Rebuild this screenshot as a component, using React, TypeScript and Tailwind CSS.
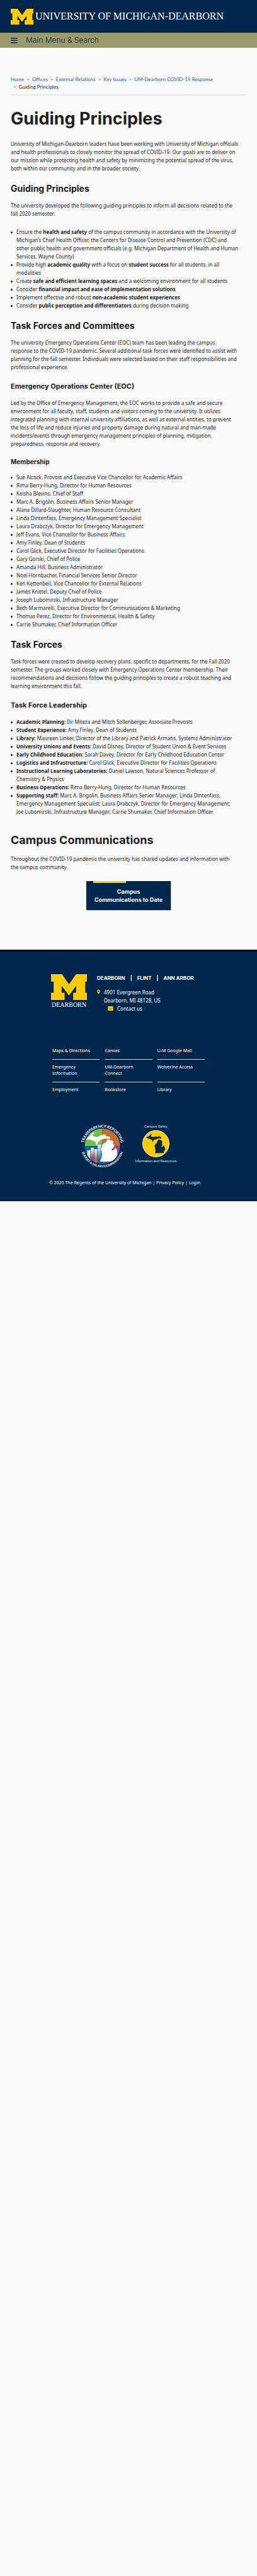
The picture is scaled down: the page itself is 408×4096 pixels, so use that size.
import type { ReactNode } from "react";

const sans = "font-['Noto_Sans','Open_Sans',sans-serif]";
const heading = "font-['Inter',sans-serif]";

function BlockM({ className }: { className: string }) {
  return (
    <svg viewBox="96 75 206 146" preserveAspectRatio="none" className={className} aria-hidden="true">
      <path
        fill="#ffcb05"
        d="M96 75H159L199 132L240 75H302V117H292V180H302V221H223V180H240V141L199 196L157 141V180H174V221H96V180H111V117H96Z"
      />
    </svg>
  );
}

function H2({ children }: { children: ReactNode }) {
  return <h2 className={`${heading} mt-[17px] text-[14px] leading-[18px] font-bold`}>{children}</h2>;
}

function H3({ children }: { children: ReactNode }) {
  return <h3 className={`${heading} mt-4 text-[11px] leading-4 font-bold`}>{children}</h3>;
}

function List({ children, className }: { children: ReactNode; className: string }) {
  return <ul className={`pr-3 ${className}`}>{children}</ul>;
}

function Item({ children }: { children: ReactNode }) {
  return (
    <li className="flex gap-[6px]">
      <span className="mt-[6px] size-[3px] shrink-0 rounded-full bg-[#111]" aria-hidden="true" />
      <span>{children}</span>
    </li>
  );
}

const crumbs = ["Home", "Offices", "External Relations", "Key Issues", "UM-Dearborn COVID-19 Response"];

const members = [
  "Sue Alcock, Provost and Executive Vice Chancellor for Academic Affairs",
  "Rima Berry-Hung, Director for Human Resources",
  "Keisha Blevins, Chief of Staff",
  "Marc A. Brigolin, Business Affairs Senior Manager",
  "Alana Dillard-Slaughter, Human Resource Consultant",
  "Linda Dintenfass, Emergency Management Specialist",
  "Laura Drabczyk, Director for Emergency Management",
  "Jeff Evans, Vice Chancellor for Business Affairs",
  "Amy Finley, Dean of Students",
  "Carol Glick, Executive Director for Facilities Operations",
  "Gary Gorski, Chief of Police",
  "Amanda Hill, Business Administrator",
  "Noel Hornbacher, Financial Services Senior Director",
  "Ken Kettenbeil, Vice Chancellor for External Relations",
  "James Knittel, Deputy Chief of Police",
  "Joseph Lubomirski, Infrastructure Manager",
  "Beth Marmarelli, Executive Director for Communications & Marketing",
  "Thomas Perez, Director for Environmental, Health & Safety",
  "Carrie Shumaker, Chief Information Officer",
];

const leaders: [string, string][] = [
  ["Academic Planning:", "Ilir Miteza and Mitch Sollenberger, Associate Provosts"],
  ["Student Experience:", "Amy Finley, Dean of Students"],
  ["Library:", "Maureen Linker, Director of the Library and Patrick Armatis, Systems Administrator"],
  ["University Unions and Events:", "David Disney, Director of Student Union & Event Services"],
  ["Early Childhood Education:", "Sarah Davey, Director for Early Childhood Education Center"],
  ["Logistics and Infrastructure:", "Carol Glick, Executive Director for Facilities Operations"],
  ["Instructional Learning Laboratories:", "Daniel Lawson, Natural Sciences Professor of Chemistry\u00a0&\u00a0Physics"],
  ["Business Operations:", "Rima Berry-Hung, Director for Human Resources"],
  [
    "Supporting staff:",
    "Marc A. Brigolin, Business Affairs Senior Manager; Linda Dintenfass, Emergency Management Specialist; Laura Drabczyk, Director for Emergency Management; Joe\u00a0Lubomirski, Infrastructure Manager; Carrie Shumaker, Chief Information Officer",
  ],
];

const footerLinks = [
  "Maps & Directions",
  "Canvas",
  "U-M Google Mail",
  "Emergency Information",
  "UM-Dearborn Connect",
  "Wolverine Access",
  "Employment",
  "Bookstore",
  "Library",
];

function TransparencyBadge() {
  return (
    <svg viewBox="35 68 400 400" className="size-[69px]" role="img" aria-label="Transparency Reporting">
      <defs>
        <clipPath id="disc">
          <circle cx="235" cy="268" r="163" />
        </clipPath>
        <linearGradient id="g1" x1="0" y1="0" x2="0" y2="1">
          <stop offset="0" stopColor="#fff" />
          <stop offset="0.8" stopColor="#76bf43" />
        </linearGradient>
        <linearGradient id="g2" x1="0" y1="0" x2="0" y2="1">
          <stop offset="0" stopColor="#fff" />
          <stop offset="0.6" stopColor="#864c9e" />
        </linearGradient>
        <linearGradient id="g3" x1="0" y1="0" x2="0" y2="1">
          <stop offset="0" stopColor="#fff" />
          <stop offset="0.6" stopColor="#cb6c2a" />
        </linearGradient>
        <linearGradient id="g4" x1="0" y1="0" x2="0" y2="1">
          <stop offset="0" stopColor="#fff" />
          <stop offset="0.8" stopColor="#0563ac" />
        </linearGradient>
        <path id="arcTop" d="M63 268A172 172 0 0 1 407 268" />
        <path id="arcBottom" d="M39 268A196 196 0 0 0 431 268" />
      </defs>
      <g clipPath="url(#disc)">
        <rect x="70" y="100" width="165" height="168" fill="#76bf43" />
        <rect x="235" y="100" width="165" height="168" fill="#cb6c2a" />
        <rect x="70" y="268" width="165" height="168" fill="#0563ac" />
        <rect x="235" y="268" width="165" height="168" fill="#864c9e" />
        <rect x="96" y="306" width="28" height="130" fill="url(#g1)" />
        <rect x="128" y="283" width="28" height="153" fill="url(#g2)" />
        <rect x="160" y="294" width="28" height="142" fill="url(#g3)" />
        <rect x="192" y="255" width="28" height="181" fill="url(#g4)" />
        <path
          fill="#fff"
          d="M80 208L100 190L118 175L133 152L150 142L165 142L148 158L143 172L160 178L190 186L205 175L225 165L240 165L255 160L265 162L262 172L280 178L298 178L308 190L305 200L285 198L255 198L235 206L225 205L210 222L198 228L190 245L184 262L176 250L174 232L160 222L140 215L118 207Z"
        />
        <path
          fill="#fff"
          d="M278 208L295 206L310 215L325 217L336 228L332 240L342 258L344 272L336 285L322 292L320 303L330 309L342 300L352 286L364 292L370 312L372 332L374 350L362 368L354 385L345 402L300 408L212 410L225 380L231 350L228 320L222 295L228 270L238 250L246 240L248 255L256 235L270 232L272 218Z"
        />
      </g>
      <circle cx="49" cy="272" r="5" fill="#0563ac" />
      <circle cx="420" cy="272" r="5" fill="#0563ac" />
      <g fill="#fff" fontFamily="Lato, sans-serif" fontWeight="700" textAnchor="middle">
        <text fontSize="35">
          <textPath href="#arcTop" startOffset="50%">TRANSPARENCY REPORTING</textPath>
        </text>
        <text fontSize="29">
          <textPath href="#arcBottom" startOffset="50%">BUDGET &amp; SALARY/COMPENSATION</textPath>
        </text>
      </g>
    </svg>
  );
}

function SafetyBadge() {
  return (
    <svg viewBox="530 68 388 360" className="h-[62px] w-[67px]" role="img" aria-label="Campus Safety">
      <g fill="#dfe5ec" fontFamily="'Liberation Sans', sans-serif" textAnchor="middle">
        <text x="724" y="98" fontSize="32">Campus Safety</text>
        <text x="724" y="419" fontSize="32">Information and Resources</text>
      </g>
      <circle cx="724" cy="245" r="122" fill="#ffcb05" stroke="#fff" strokeWidth="5" />
      <path
        fill="#00274c"
        d="M634 186L655 178L672 162L688 156L682 168L675 177L695 182L705 184L722 178L740 182L752 176L758 180L770 182L774 198L745 196L728 204L712 208L702 215L695 230L688 210L665 202L645 194Z"
      />
      <path
        fill="#00274c"
        d="M745 208L765 210L780 220L784 232L780 245L784 258L774 272L780 278L796 260L806 280L810 298L800 312L795 332L714 332L720 310L718 290L712 268L718 250L732 240L738 225Z"
      />
    </svg>
  );
}

export default function App() {
  return (
    <div className={`${sans} min-h-screen bg-[#fafafa] text-[8px] leading-[13px] text-[#1a1a1a]`}>
      <header>
        <div className="flex h-[52px] items-center bg-[#00274c] px-[17px]">
          <a href="#home" className="flex items-center gap-[3px] text-white">
            <BlockM className="h-[25px] w-9 shrink-0" />
            <span className="font-['Liberation_Serif',serif] text-[16px] leading-5 whitespace-nowrap">
              UNIVERSITY OF MICHIGAN-DEARBORN
            </span>
          </a>
        </div>
        <div className="flex h-6 items-center bg-[#9b9a6d] px-[17px]">
          <button
            type="button"
            className={`${heading} flex items-center gap-[13px] text-[12px] leading-4 font-light text-[#00274c]`}
          >
            <svg viewBox="0 0 21 18" className="h-[9px] w-[11px]" fill="currentColor" aria-hidden="true">
              <rect width="21" height="3" rx="1" />
              <rect y="7" width="21" height="3" rx="1" />
              <rect y="14" width="21" height="3" rx="1" />
            </svg>
            Main Menu &amp; Search
          </button>
        </div>
      </header>

      <main className="px-[17px] pt-11 pb-[63px]">
        <nav aria-label="Breadcrumb" className="rounded-b-sm border-b-2 border-[#e5e8ed] pb-[6px]">
          <ol className="flex flex-wrap font-['Lato',sans-serif] leading-3">
            {crumbs.map((c, i) => (
              <li key={c} className="flex">
                {i > 0 && <span className="px-1 text-[#555]">&gt;</span>}
                <a href="#crumb" className="text-[#1d5ba5]">{c}</a>
              </li>
            ))}
            <li className="flex basis-full">
              <span className="px-1 text-[#555]">&gt;</span>
              Guiding Principles
            </li>
          </ol>
        </nav>

        <h1 className={`${heading} mt-[21px] text-[27px] leading-8 font-bold text-[#212121]`}>Guiding Principles</h1>
        <p className="mt-[17px] pr-3">
          University of Michigan-Dearborn leaders have been working with University of Michigan officials and health
          professionals to closely monitor the spread of COVID-19. Our goals are to deliver on our mission while
          protecting health and safety by minimizing the potential spread of the virus, both within our community and in
          the broader society.
        </p>

        <H2>Guiding Principles</H2>
        <p className="mt-[11px] pr-3">
          The university developed the following guiding principles to inform all decisions related to the fall 2020
          semester:
        </p>
        <List className="mt-4">
          <Item>
            Ensure the <b>health and safety</b> of the campus community in accordance with the University of Michigan’s
            Chief Health Officer, the Centers for Disease Control and Prevention (CDC) and other public health and
            government officials (e.g. Michigan Department of Health and Human Services, Wayne County)
          </Item>
          <Item>
            Provide high <b>academic quality</b> with a focus on <b>student success</b> for all students, in all
            modalities
          </Item>
          <Item>
            Create <b>safe and efficient learning spaces</b> and a welcoming environment for all students
          </Item>
          <Item>
            Consider <b>financial impact and ease of implementation solutions</b>
          </Item>
          <Item>
            Implement effective and robust <b>non-academic student experiences</b>
          </Item>
          <Item>
            Consider <b>public perception and differentiators</b> during decision making
          </Item>
        </List>

        <H2>Task Forces and Committees</H2>
        <p className="mt-[11px] pr-3">
          The university Emergency Operations Center (EOC) team has been leading the campus
          <br />
          response to the COVID-19 pandemic. Several additional task forces were identified to assist with planning for
          the fall semester. Individuals were selected based on their staff responsibilities and professional
          experience.
        </p>

        <H3>Emergency Operations Center (EOC)</H3>
        <p className="mt-3 pr-3">
          Led by the Office of Emergency Management, the EOC works to provide a safe and secure
          <br />
          environment for all faculty, staff, students and visitors coming to the university. It utilizes
          <br />
          integrated planning with internal university affiliations, as well as external entities, to prevent
          <br />
          the loss of life and reduce injuries and property damage during natural and man-made
          <br />
          incidents/events through emergency management principles of planning, mitigation,
          <br />
          preparedness, response and recovery.
        </p>

        <h4 className={`${heading} mt-[15px] text-[10px] leading-[14px] font-bold`}>Membership</h4>
        <List className="mt-[11px]">
          {members.map((m) => (
            <Item key={m}>{m}</Item>
          ))}
        </List>

        <H2>Task Forces</H2>
        <p className="mt-[11px] pr-3">
          Task forces were created to develop recovery plans, specific to departments, for the Fall 2020
          <br />
          semester. The groups worked closely with Emergency Operations Center membership. Their
          <br />
          recommendations and decisions follow the guiding principles to create a robust teaching and
          <br />
          learning environment this fall.
        </p>

        <H3>Task Force Leadership</H3>
        <List className="mt-3">
          {leaders.map(([role, who]) => (
            <Item key={role}>
              <b>{role}</b> {who}
            </Item>
          ))}
        </List>

        <h2 className={`${heading} mt-[27px] text-[18px] leading-6 font-bold text-[#212121]`}>Campus Communications</h2>
        <p className="mt-[11px] pr-3">
          Throughout the COVID-19 pandemic the university has shared updates and information with
          <br />
          the campus community.
        </p>
        <a
          href="#communications"
          className={`${heading} mx-auto mt-4 block w-[134px] bg-[#00274c] px-[11px] pb-[10px] text-center text-[9px] leading-[13px] font-bold text-white shadow-[1px_1px_0_#bbb]`}
        >
          <span className="mb-[7px] block h-[3px] w-[52px] bg-[#ffcb05]" />
          Campus Communications to Date
        </a>
      </main>

      <footer className="border-t-[3px] border-[#000029] bg-[#00274c] pt-9 pb-[23px] text-white">
        <div className="mx-auto w-[246px]">
          <div className="flex gap-4">
            <div className="w-[57px]">
              <BlockM className="h-[41px] w-[57px]" />
              <div className="mt-[2px] text-center font-['Liberation_Serif',serif] text-[10px] leading-3">DEARBORN</div>
            </div>
            <div>
              <div className={`${heading} flex gap-2 text-[8px] leading-3 font-bold`}>
                <a href="#dearborn">DEARBORN</a>
                <span>|</span>
                <a href="#flint">FLINT</a>
                <span>|</span>
                <a href="#annarbor">ANN ARBOR</a>
              </div>
              <address className="mt-[10px] not-italic">
                <div className="flex gap-[6px]">
                  <svg viewBox="0 0 10 14" className="mt-[2px] h-2 w-[5px]" aria-hidden="true">
                    <path
                      fill="#ffcb05"
                      fillRule="evenodd"
                      d="M5 0A5 5 0 0 0 0 5C0 7 1 8 3.600 13.300Q5 14.800 6.400 13.300C9 8 10 7 10 5A5 5 0 0 0 5 0M5 2.700A2.300 2.300 0 1 1 5 7.300A2.300 2.300 0 1 1 5 2.700Z"
                    />
                  </svg>
                  <span>
                    4901 Evergreen Road
                    <br />
                    Dearborn, MI 48128, US
                  </span>
                </div>
                <a href="#contact" className="flex items-center gap-[6px] pl-[17px]">
                  <svg viewBox="0 0 17 14" className="h-[7px] w-[9px]" aria-hidden="true">
                    <rect width="17" height="14" rx="1.5" fill="#ffcb05" />
                    <path d="M0 4L7 9.200Q8.500 10.200 10 9.200L17 4" fill="none" stroke="#00274c" strokeWidth="1" />
                  </svg>
                  Contact us
                </a>
              </address>
            </div>
          </div>

          <ul className="mt-[49px] grid grid-cols-3 gap-x-2 px-[2px] text-[7px] leading-[10px]">
            {footerLinks.map((l, i) => (
              <li key={l} className={i < 6 ? "border-b border-[#ccd4db] pt-[7px] pr-2 pb-2" : "pt-[7px]"}>
                <a href="#link">{l}</a>
              </li>
            ))}
          </ul>
        </div>

        <div className="mt-[50px] flex justify-center gap-[17px]">
          <TransparencyBadge />
          <SafetyBadge />
        </div>
        <p className="mt-[18px] pr-3 text-center text-[7px] leading-3">
          © 2020 The Regents of the University of Michigan | <a href="#privacy">Privacy Policy</a> |{" "}
          <a href="#login">Login</a>
        </p>
      </footer>
    </div>
  );
}
